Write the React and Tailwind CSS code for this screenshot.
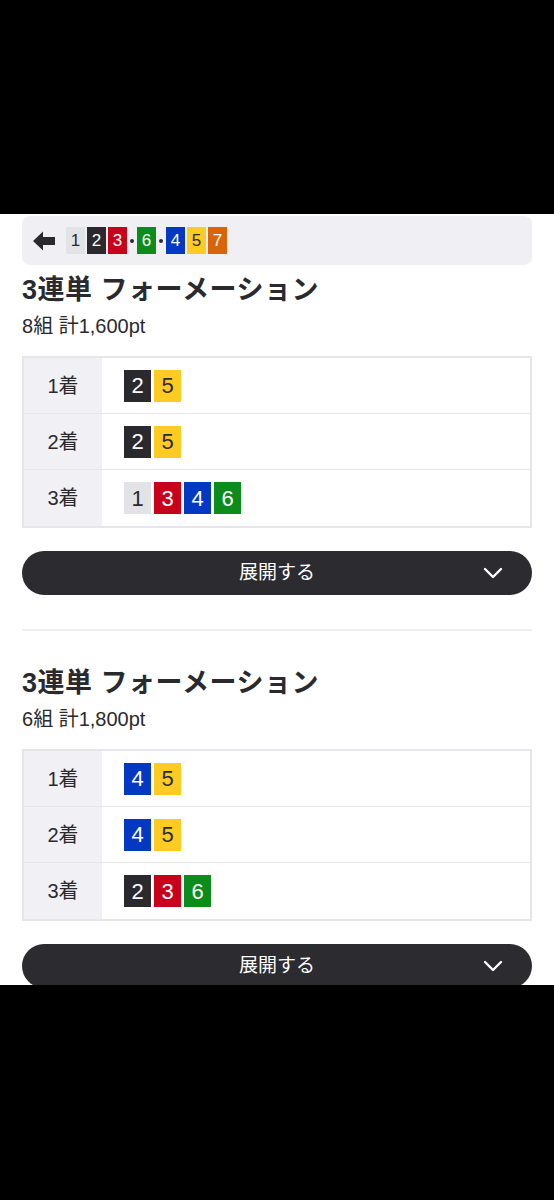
import React from 'react'

const font = { fontFamily: '"Liberation Sans", "Noto Sans CJK JP", sans-serif' }

// Boat colours by number
const boat = {
  1: 'bg-[#e2e3e7] text-[#2a2a2e]',
  2: 'bg-[#2a2a2e] text-white',
  3: 'bg-[#c9001c] text-white',
  4: 'bg-[#0339c2] text-white',
  5: 'bg-[#fdcb22] text-[#2a2a2e]',
  6: 'bg-[#0b8c1b] text-white',
  7: 'bg-[#da6508] text-white',
}

function SmallBox({ n }) {
  return (
    <span className={`w-[19px] h-[27px] flex items-center justify-center text-[17px] ${boat[n]}`}>{n}</span>
  )
}

function Dot() {
  return <span className="w-[6px] flex justify-center"><span className="w-[4px] h-[4px] rounded-full bg-[#2a2a2e]" /></span>
}

function BigBox({ n }) {
  return (
    <span className={`w-[27px] h-[32px] flex items-center justify-center text-[22px] ${boat[n]}`}>{n}</span>
  )
}

function Chevron() {
  return (
    <svg width="20" height="12" viewBox="0 0 20 12" fill="none">
      <path d="M2 2 L10 10 L18 2" stroke="white" strokeWidth="2.4" strokeLinecap="round" strokeLinejoin="round" />
    </svg>
  )
}

function Section({ combos, total, rows }) {
  return (
    <div>
      <h2 className="text-[27px] leading-[36px] font-bold tracking-[0.5px] text-[#2a2a2e]">3連単 フォーメーション</h2>
      <p className="mt-[5px] text-[20px] leading-[26px] text-[#2a2a2e]">{combos}組 計{total}pt</p>

      {/* Formation table */}
      <div className="mt-[17px] border-2 border-[#e6e6ea] divide-y divide-[#e6e6ea]">
        {rows.map((nums, i) => (
          <div key={i} className="flex h-[56px]">
            <div className="w-[78px] bg-[#f1f1f5] flex items-center justify-center text-[20px] text-[#2a2a2e]">{i + 1}着</div>
            <div className="flex-1 bg-white flex items-center gap-[3px] pl-[22px]">
              {nums.map(n => <BigBox key={n} n={n} />)}
            </div>
          </div>
        ))}
      </div>

      <button className="mt-[23px] w-full h-[44px] rounded-full bg-[#2b2b30] relative flex items-center justify-center text-white text-[19px]">
        展開する
        <span className="absolute right-[29px] top-[16px]"><Chevron /></span>
      </button>
    </div>
  )
}

export default function App() {
  return (
    <div className="w-[554px] h-[1200px] bg-black flex flex-col" style={font}>
      <div className="h-[214px] shrink-0" />

      <div className="h-[771px] shrink-0 bg-white overflow-hidden px-[22px] pt-[2px]">
        {/* Result header */}
        <div className="h-[49px] rounded-lg bg-[#f0f0f4] flex items-center pl-[11px]">
          <svg width="23" height="20" viewBox="0 0 23 20" className="mr-[10px]">
            <path d="M0 10 L10 0.5 L10 6 L22 6 L22 14 L10 14 L10 19.5 Z" fill="#2a2a2e" />
          </svg>
          <div className="flex items-center gap-[2px]">
            <SmallBox n={1} />
            <SmallBox n={2} />
            <SmallBox n={3} />
            <Dot />
            <SmallBox n={6} />
            <Dot />
            <SmallBox n={4} />
            <SmallBox n={5} />
            <SmallBox n={7} />
          </div>
        </div>

        <div className="mt-[7px]">
          <Section combos={8} total="1,600" rows={[[2, 5], [2, 5], [1, 3, 4, 6]]} />
        </div>

        <div className="mt-[34px] h-[2px] bg-[#f0f0f2]" />

        <div className="mt-[34px]">
          <Section combos={6} total="1,800" rows={[[4, 5], [4, 5], [2, 3, 6]]} />
        </div>
      </div>

      <div className="flex-1" />
    </div>
  )
}
